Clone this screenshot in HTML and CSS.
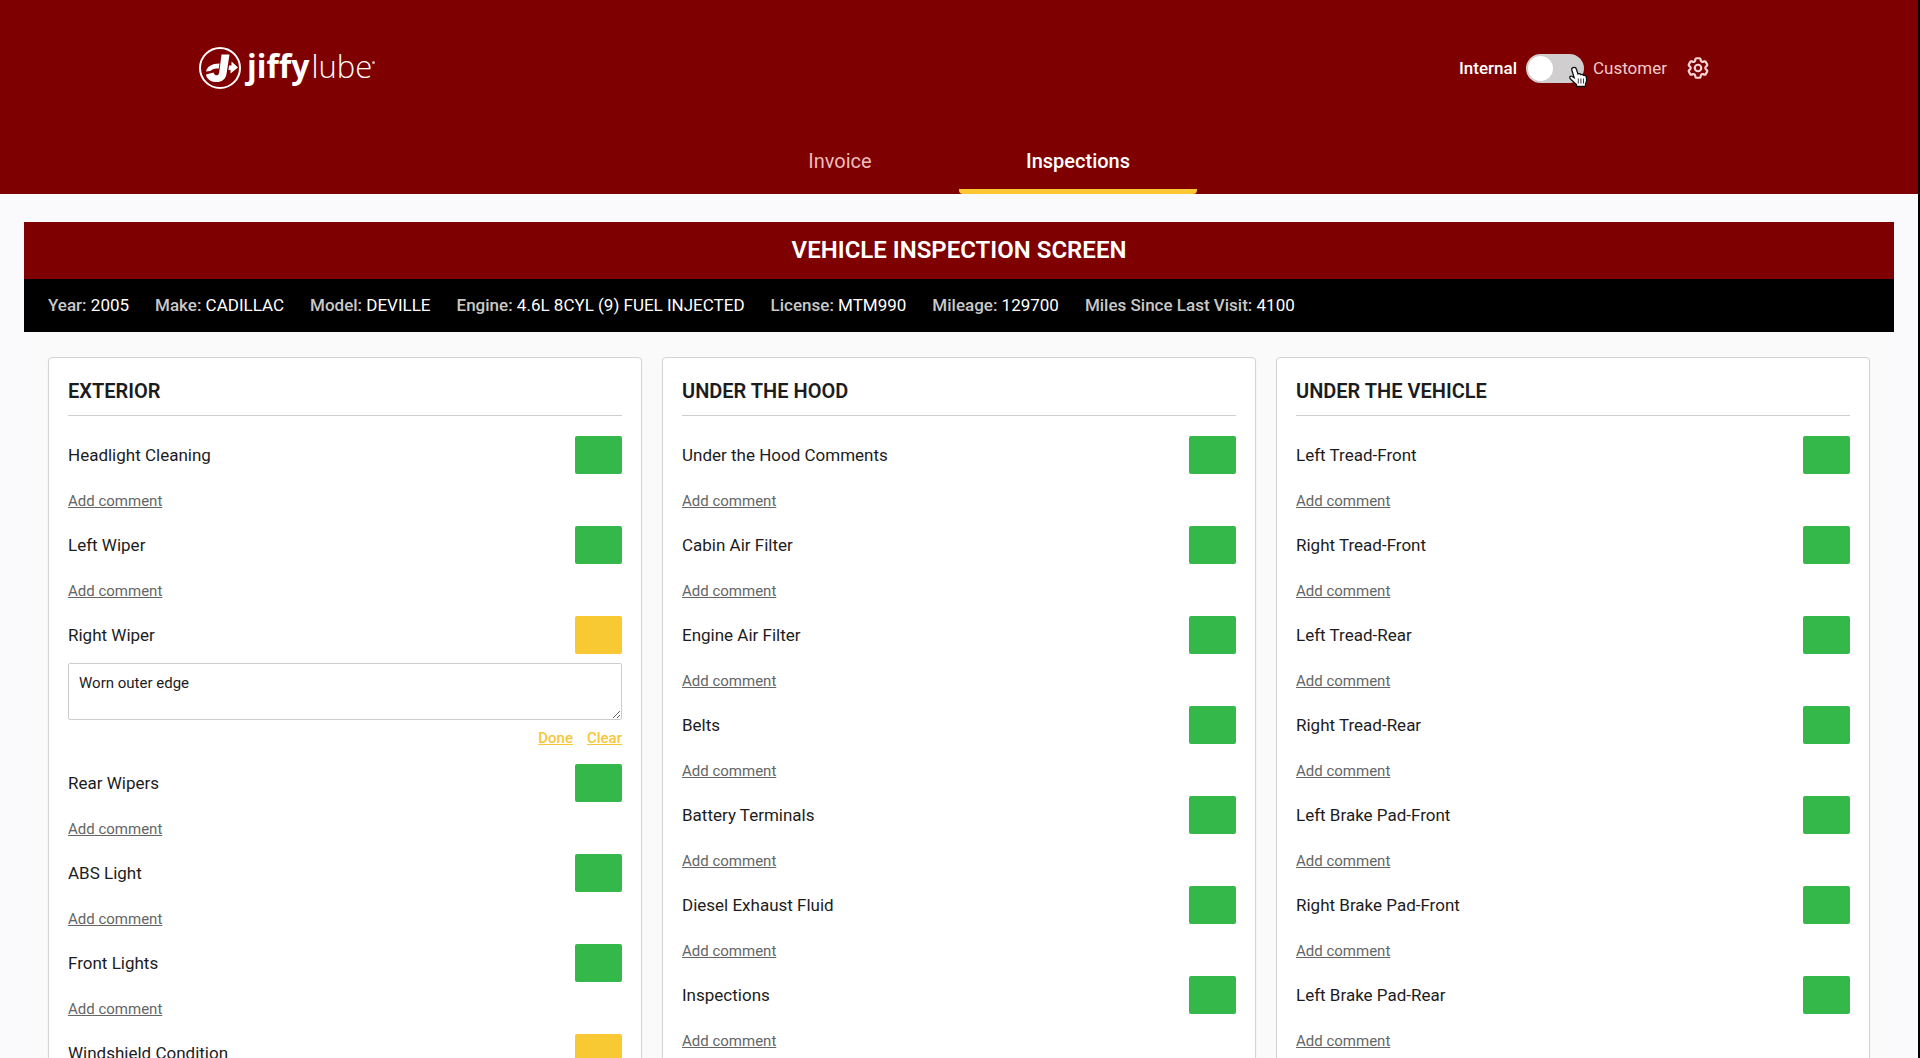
FILE: index.html
```html
<!DOCTYPE html>
<html lang="en">
<head>
<meta charset="utf-8">
<meta name="viewport" content="width=device-width, initial-scale=1">
<title>Vehicle Inspection Screen</title>
<link rel="stylesheet" href="styles.css">
</head>
<body>
<header class="header">
  <div class="header-bar">
    <a class="logo" href="#" aria-label="Jiffy Lube home">
      <svg class="logo-mark" viewBox="0 0 44 44" aria-hidden="true">
        <circle cx="22" cy="22" r="20" fill="none" stroke="#fff" stroke-width="2"/>
        <path d="M23.500 8.500H31.500L28.500 28C27.500 34 23 36.500 17 36C12 35.500 8.500 32.500 8 28.500L15.500 26.500C16.500 30 20.500 30.500 21.200 26.500Z" fill="#fff"/>
        <path d="M8 25.500C9 20.500 14 17.500 21.500 17.500L20.800 22.500C17 22.500 14 23 12.500 25Z" fill="#fff"/>
        <path d="M31 19.500H33.500V15.500L40 21.500L32.500 27.500V24H30.500Z" fill="#fff"/>
      </svg>
      <span class="logo-text"><b>jiffy</b><span class="logo-light">lube</span></span>
      <span class="logo-dot"></span>
    </a>
    <div class="view-switch">
      <span class="switch-on">Internal</span>
      <label class="switch">
        <input type="checkbox" role="switch" aria-label="Customer view">
        <svg class="pointer" viewBox="0 0 20 22" aria-hidden="true">
          <path d="M5.500 1.500C7 1 8 1.800 8.400 3.200L10 8C11.200 7.300 12.300 7.600 12.700 8.600C13.800 8 15 8.300 15.400 9.400C17 9 18.200 10 18.500 12C18.900 14.500 18.500 16 17.500 18V20.500H8.500V18.500C6.500 17 4.500 15 2.500 13C.8 11.200 2.200 9.500 4.200 10.500L6.200 11.800L3.800 4C3.500 2.700 4.200 1.800 5.500 1.500Z" fill="#fff" stroke="#111" stroke-width="1.300"/>
          <path d="M10.300 12.500V17.500M12.900 12.500V17.500M15.500 12.500V17.500" stroke="#222" stroke-width=".9"/>
        </svg>
      </label>
      <span class="switch-off">Customer</span>
      <button class="settings" type="button" aria-label="Settings">
        <svg viewBox="0 0 24 24" aria-hidden="true" fill="none" stroke="#f8d4d4" stroke-width="2" stroke-linejoin="round">
          <path d="M9.594 3.940c.090-.542.560-.940 1.110-.940h2.593c.550 0 1.020.398 1.110.940l.213 1.281c.063.374.313.686.645.870.074.040.147.083.220.127.324.196.720.257 1.075.124l1.217-.456a1.125 1.125 0 0 1 1.370.490l1.296 2.247a1.125 1.125 0 0 1-.260 1.431l-1.003.827c-.293.240-.438.613-.431.992a6.759 6.759 0 0 1 0 .255c-.007.378.138.750.430.990l1.005.828c.424.350.534.954.260 1.430l-1.298 2.247a1.125 1.125 0 0 1-1.369.491l-1.217-.456c-.355-.133-.750-.072-1.076.124a6.570 6.570 0 0 1-.220.128c-.331.183-.581.495-.644.869l-.213 1.280c-.090.543-.560.941-1.110.941h-2.594c-.550 0-1.020-.398-1.110-.940l-.213-1.281c-.062-.374-.312-.686-.644-.870a6.520 6.520 0 0 1-.220-.127c-.325-.196-.720-.257-1.076-.124l-1.217.456a1.125 1.125 0 0 1-1.369-.490l-1.297-2.247a1.125 1.125 0 0 1 .260-1.431l1.004-.827c.292-.240.437-.613.430-.992a6.932 6.932 0 0 1 0-.255c.007-.378-.138-.750-.430-.990l-1.004-.828a1.125 1.125 0 0 1-.260-1.430l1.297-2.247a1.125 1.125 0 0 1 1.370-.491l1.216.456c.356.133.751.072 1.076-.124.072-.044.146-.087.220-.128.332-.183.582-.495.644-.869l.214-1.281z"/>
          <circle cx="12" cy="12" r="3"/>
        </svg>
      </button>
    </div>
  </div>
  <nav class="tabs">
    <a class="tab" href="#invoice">Invoice</a>
    <a class="tab tab-active" href="#inspections" aria-current="page">Inspections</a>
  </nav>
</header>

<main class="panel">
  <h1 class="panel-title">VEHICLE INSPECTION SCREEN</h1>
  <div class="vehicle">
    <span><b>Year:</b> 2005</span>
    <span><b>Make:</b> CADILLAC</span>
    <span><b>Model:</b> DEVILLE</span>
    <span><b>Engine:</b> 4.6L 8CYL (9) FUEL INJECTED</span>
    <span><b>License:</b> MTM990</span>
    <span><b>Mileage:</b> 129700</span>
    <span><b>Miles Since Last Visit:</b> 4100</span>
  </div>

  <div class="columns">
    <section class="card">
      <h2>EXTERIOR</h2>
      <div class="item"><span>Headlight Cleaning</span><button class="status" type="button" aria-label="Good"></button></div>
      <div class="comment"><button class="link" type="button">Add comment</button></div>
      <div class="item"><span>Left Wiper</span><button class="status" type="button" aria-label="Good"></button></div>
      <div class="comment"><button class="link" type="button">Add comment</button></div>
      <div class="item"><label for="right-wiper">Right Wiper</label><button class="status status-warn" type="button" aria-label="Caution"></button></div>
      <div class="editor">
        <textarea id="right-wiper">Worn outer edge</textarea>
        <div class="editor-actions">
          <button class="link link-accent" type="button">Done</button>
          <button class="link link-accent" type="button">Clear</button>
        </div>
      </div>
      <div class="item"><span>Rear Wipers</span><button class="status" type="button" aria-label="Good"></button></div>
      <div class="comment"><button class="link" type="button">Add comment</button></div>
      <div class="item"><span>ABS Light</span><button class="status" type="button" aria-label="Good"></button></div>
      <div class="comment"><button class="link" type="button">Add comment</button></div>
      <div class="item"><span>Front Lights</span><button class="status" type="button" aria-label="Good"></button></div>
      <div class="comment"><button class="link" type="button">Add comment</button></div>
      <div class="item"><span>Windshield Condition</span><button class="status status-warn" type="button" aria-label="Caution"></button></div>
    </section>

    <section class="card">
      <h2>UNDER THE HOOD</h2>
      <div class="item"><span>Under the Hood Comments</span><button class="status" type="button" aria-label="Good"></button></div>
      <div class="comment"><button class="link" type="button">Add comment</button></div>
      <div class="item"><span>Cabin Air Filter</span><button class="status" type="button" aria-label="Good"></button></div>
      <div class="comment"><button class="link" type="button">Add comment</button></div>
      <div class="item"><span>Engine Air Filter</span><button class="status" type="button" aria-label="Good"></button></div>
      <div class="comment"><button class="link" type="button">Add comment</button></div>
      <div class="item"><span>Belts</span><button class="status" type="button" aria-label="Good"></button></div>
      <div class="comment"><button class="link" type="button">Add comment</button></div>
      <div class="item"><span>Battery Terminals</span><button class="status" type="button" aria-label="Good"></button></div>
      <div class="comment"><button class="link" type="button">Add comment</button></div>
      <div class="item"><span>Diesel Exhaust Fluid</span><button class="status" type="button" aria-label="Good"></button></div>
      <div class="comment"><button class="link" type="button">Add comment</button></div>
      <div class="item"><span>Inspections</span><button class="status" type="button" aria-label="Good"></button></div>
      <div class="comment"><button class="link" type="button">Add comment</button></div>
    </section>

    <section class="card">
      <h2>UNDER THE VEHICLE</h2>
      <div class="item"><span>Left Tread-Front</span><button class="status" type="button" aria-label="Good"></button></div>
      <div class="comment"><button class="link" type="button">Add comment</button></div>
      <div class="item"><span>Right Tread-Front</span><button class="status" type="button" aria-label="Good"></button></div>
      <div class="comment"><button class="link" type="button">Add comment</button></div>
      <div class="item"><span>Left Tread-Rear</span><button class="status" type="button" aria-label="Good"></button></div>
      <div class="comment"><button class="link" type="button">Add comment</button></div>
      <div class="item"><span>Right Tread-Rear</span><button class="status" type="button" aria-label="Good"></button></div>
      <div class="comment"><button class="link" type="button">Add comment</button></div>
      <div class="item"><span>Left Brake Pad-Front</span><button class="status" type="button" aria-label="Good"></button></div>
      <div class="comment"><button class="link" type="button">Add comment</button></div>
      <div class="item"><span>Right Brake Pad-Front</span><button class="status" type="button" aria-label="Good"></button></div>
      <div class="comment"><button class="link" type="button">Add comment</button></div>
      <div class="item"><span>Left Brake Pad-Rear</span><button class="status" type="button" aria-label="Good"></button></div>
      <div class="comment"><button class="link" type="button">Add comment</button></div>
    </section>
  </div>
</main>
</body>
</html>
```
FILE: styles.css
```css
* {
  box-sizing: border-box;
}

html {
  background: #faf9fb;
  scrollbar-width: none;
}

body {
  margin: 0;
  border-right: 2px solid #000;
  color: #1c1c1e;
  font: 17px/20px Roboto, sans-serif;
}

button,
textarea {
  font: inherit;
  color: inherit;
}

.header {
  background: #7e0000;
  color: #fff;
}

.header-bar {
  display: flex;
  justify-content: space-between;
  align-items: center;
  height: 136px;
  max-width: 1522px;
  margin: 0 auto;
}

.logo {
  display: flex;
  align-items: center;
  color: #fff;
  text-decoration: none;
}

.logo-mark {
  width: 44px;
  height: 44px;
}

.logo-text {
  display: flex;
  align-items: baseline;
  gap: 2px;
  margin: 0 0 4px 5px;
  font: 32px/40px "Open Sans", sans-serif;
}

.logo-light {
  font-size: 31px;
  font-weight: 300;
}

.logo-dot {
  width: 3px;
  height: 3px;
  margin: 0 0 12px;
  border-radius: 50%;
  background: #e0b0b0;
}

.view-switch {
  display: flex;
  align-items: center;
  gap: 9px;
}

.switch-on {
  font-weight: 500;
}

.switch-off {
  color: #f3caca;
}

.switch {
  position: relative;
  display: flex;
}

.switch input {
  appearance: none;
  width: 58px;
  height: 29px;
  margin: 0;
  padding: 2px;
  border-radius: 15px;
  background: #d0cece;
}

.switch input::before {
  content: "";
  display: block;
  width: 25px;
  height: 25px;
  border-radius: 50%;
  background: #fff;
}

.pointer {
  position: absolute;
  right: -4px;
  bottom: -5px;
  width: 20px;
  height: 22px;
}

.settings {
  display: flex;
  padding: 9px;
  border: 0;
  background: none;
}

.settings svg {
  width: 26px;
  height: 26px;
}

.tabs {
  display: flex;
  justify-content: center;
}

.tab {
  width: 238px;
  height: 58px;
  padding-top: 13px;
  border-bottom: 5px solid transparent;
  color: #eebcbc;
  font-size: 20px;
  line-height: 24px;
  text-align: center;
  text-decoration: none;
}

.tab-active {
  color: #fff;
  font-weight: 500;
  background: linear-gradient(#fbc834, #fbc834) bottom / 100% 5px no-repeat border-box;
  border-radius: 0 0 4px 4px;
}

.panel {
  margin: 28px 24px 24px;
  background: #fafafa;
}

.panel-title {
  margin: 0;
  padding: 14px;
  background: #7e0000;
  color: #fff;
  font-size: 24px;
  line-height: 29px;
  font-weight: 600;
  text-align: center;
}

.vehicle {
  display: flex;
  flex-wrap: wrap;
  gap: 26px;
  padding: 16px 24px;
  background: #000;
  color: #fff;
  line-height: 21px;
}

.vehicle b {
  color: #c8c8c8;
  font-weight: 500;
}

.columns {
  display: grid;
  grid-template-columns: repeat(3, 1fr);
  gap: 20px;
  padding: 25px 24px;
}

.card {
  padding: 19px;
  border: 1px solid #d3d3d3;
  border-radius: 4px;
  background: #fff;
  box-shadow: 0 1px 2px #0000000d;
}

.card h2 {
  margin: 0 0 20px;
  padding: 3px 0 12px;
  border-bottom: 1px solid #cfcfcf;
  font-size: 20px;
  line-height: 23px;
  font-weight: 600;
}

.item {
  display: flex;
  justify-content: space-between;
  align-items: center;
}

.status {
  width: 47px;
  height: 38px;
  padding: 0;
  border: 0;
  border-radius: 2px;
  background: #34b84a;
}

.status-warn {
  background: #f9c933;
}

.comment {
  display: flex;
  padding: 17px 0 15px;
}

.link {
  padding: 0;
  border: 0;
  background: none;
  color: #666;
  font-size: 15px;
  line-height: 20px;
  text-decoration: underline;
}

.link-accent {
  color: #f5c63c;
  font-weight: 500;
}

.editor {
  padding: 9px 0 16px;
}

textarea {
  display: block;
  width: 100%;
  height: 57px;
  padding: 9px 10px;
  border: 1px solid #ccc;
  border-radius: 2px;
  font-size: 15px;
}

.editor-actions {
  display: flex;
  justify-content: flex-end;
  gap: 14px;
  padding-top: 8px;
}
```
